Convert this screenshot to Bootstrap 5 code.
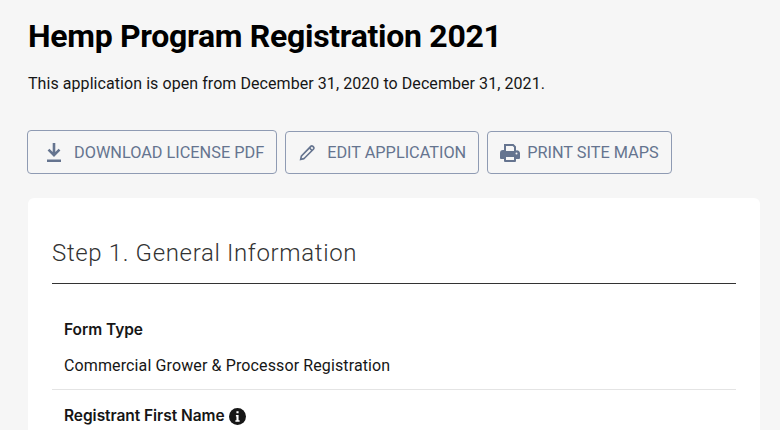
<!doctype html>
<html lang="en"><head><meta charset="utf-8"><title>Hemp Program Registration 2021</title>
<link href="https://cdn.jsdelivr.net/npm/bootstrap@5.3.0/dist/css/bootstrap.min.css" rel="stylesheet">
<style>
html,body{height:430px;overflow:hidden}
body{background:#f6f6f6;color:#161616;font-family:Roboto,"Liberation Sans",sans-serif}
.page-wrap{padding:16px 20px 0 28px}
.page-title{font-size:32px;line-height:40px;font-weight:700;margin:0 0 16px;color:#000;font-family:Roboto,sans-serif;letter-spacing:-.3px}
.intro{font-size:16px;line-height:24px;margin:0 0 34px;letter-spacing:.065px}
.action-row{gap:8px;margin-left:-1px;margin-bottom:24px;align-items:center}
.act-btn{display:inline-flex;align-items:center;color:#65748f;border:1px solid #8f9bb3;border-radius:4px;background:transparent;font-size:16.3px;line-height:24px;padding:9px 12px 7px;height:43px}
.act-btn:hover{color:#65748f;border-color:#8f9bb3}
.act-btn.first{height:44px;padding-left:18px}
.act-btn svg{flex:none;fill:#65748f}
.icon-gap-a{margin-right:12px}
.icon-gap-b{margin-right:11px}
.icon-gap-c{margin-right:7px}
.icon-nudge{margin-top:-1px}
.sheet{background:#fff;border-radius:6px;padding:36px 24px 0}
.step-title{font-size:24px;line-height:38px;font-weight:300;color:#333;margin:0 0 11px;letter-spacing:.65px}
.step-rule{border-top:1px solid #333;margin:0;opacity:1}
.field{padding:34px 12px 11px;border-bottom:1px solid #e4e4e4}
.field.next{padding-top:14px;border:0}
.f-label{font-size:15.5px;line-height:24px;font-weight:600;color:#161616;margin-bottom:12px;font-family:Inter,Roboto,sans-serif;letter-spacing:-.05px}
.f-value{font-size:16px;line-height:24px;letter-spacing:.12px}
</style></head><body>
<main class="page-wrap">
<h1 class="page-title">Hemp Program Registration 2021</h1>
<p class="intro">This application is open from December 31, 2020 to December 31, 2021.</p>
<div class="d-flex action-row">
<a href="#" class="btn act-btn first"><svg class="icon-gap-a icon-nudge" width="16" height="19" viewBox="0 0 16 19"><path d="M6.700 0h2.600v9l3.300-3.300 1.800 1.800L8 13.900 1.600 7.500l1.800-1.800L6.700 9zM1 16.500h14V19H1z"/></svg>DOWNLOAD LICENSE PDF</a>
<a href="#" class="btn act-btn"><svg class="icon-gap-b icon-nudge" width="18" height="18" viewBox="0 0 18 18"><path d="M12.400 1.600a2 2 0 0 1 2.800 0l1 1a2 2 0 0 1 0 2.800L6.200 15.400 1.600 16.400l1-4.600zM11.500 5 4.300 12.200l-.6 2.100 2.100-.6L13 6.500zm1.100-1.100 1.500 1.500.9-.9a.6.6 0 0 0 0-.8l-.7-.7a.6.6 0 0 0-.8 0z"/></svg>EDIT APPLICATION</a>
<a href="#" class="btn act-btn"><svg class="icon-gap-c icon-nudge" width="20" height="18" viewBox="0 0 20 18"><path d="M4 0h9.500L16 2.500V6.500a3 3 0 0 1 4 2.500v5a1 1 0 0 1-1 1h-3v2a1 1 0 0 1-1 1H5a1 1 0 0 1-1-1v-2H1a1 1 0 0 1-1-1V9a3 3 0 0 1 3-3h1zm2 2v5h8V3.300L12.700 2zm0 11v3h8v-3z"/><circle cx="16.500" cy="9.500" r="1" fill="#f6f6f6"/></svg>PRINT SITE MAPS</a>
</div>
<section class="sheet">
<h2 class="step-title">Step 1. General Information</h2>
<hr class="step-rule">
<div class="field"><div class="f-label">Form Type</div><div class="f-value">Commercial Grower &amp; Processor Registration</div></div>
<div class="field next"><div class="f-label d-flex align-items-center gap-1">Registrant First Name <svg width="17" height="17" viewBox="0 0 16 16" aria-hidden="true"><circle cx="8" cy="8" r="8" fill="#161616"/><path fill="#fff" d="M7 3h2v2H7zM6.500 6.500H9v5h1V13H6v-1.500h1V8h-.5z"/></svg></div></div>
</section>
</main>
</body></html>
